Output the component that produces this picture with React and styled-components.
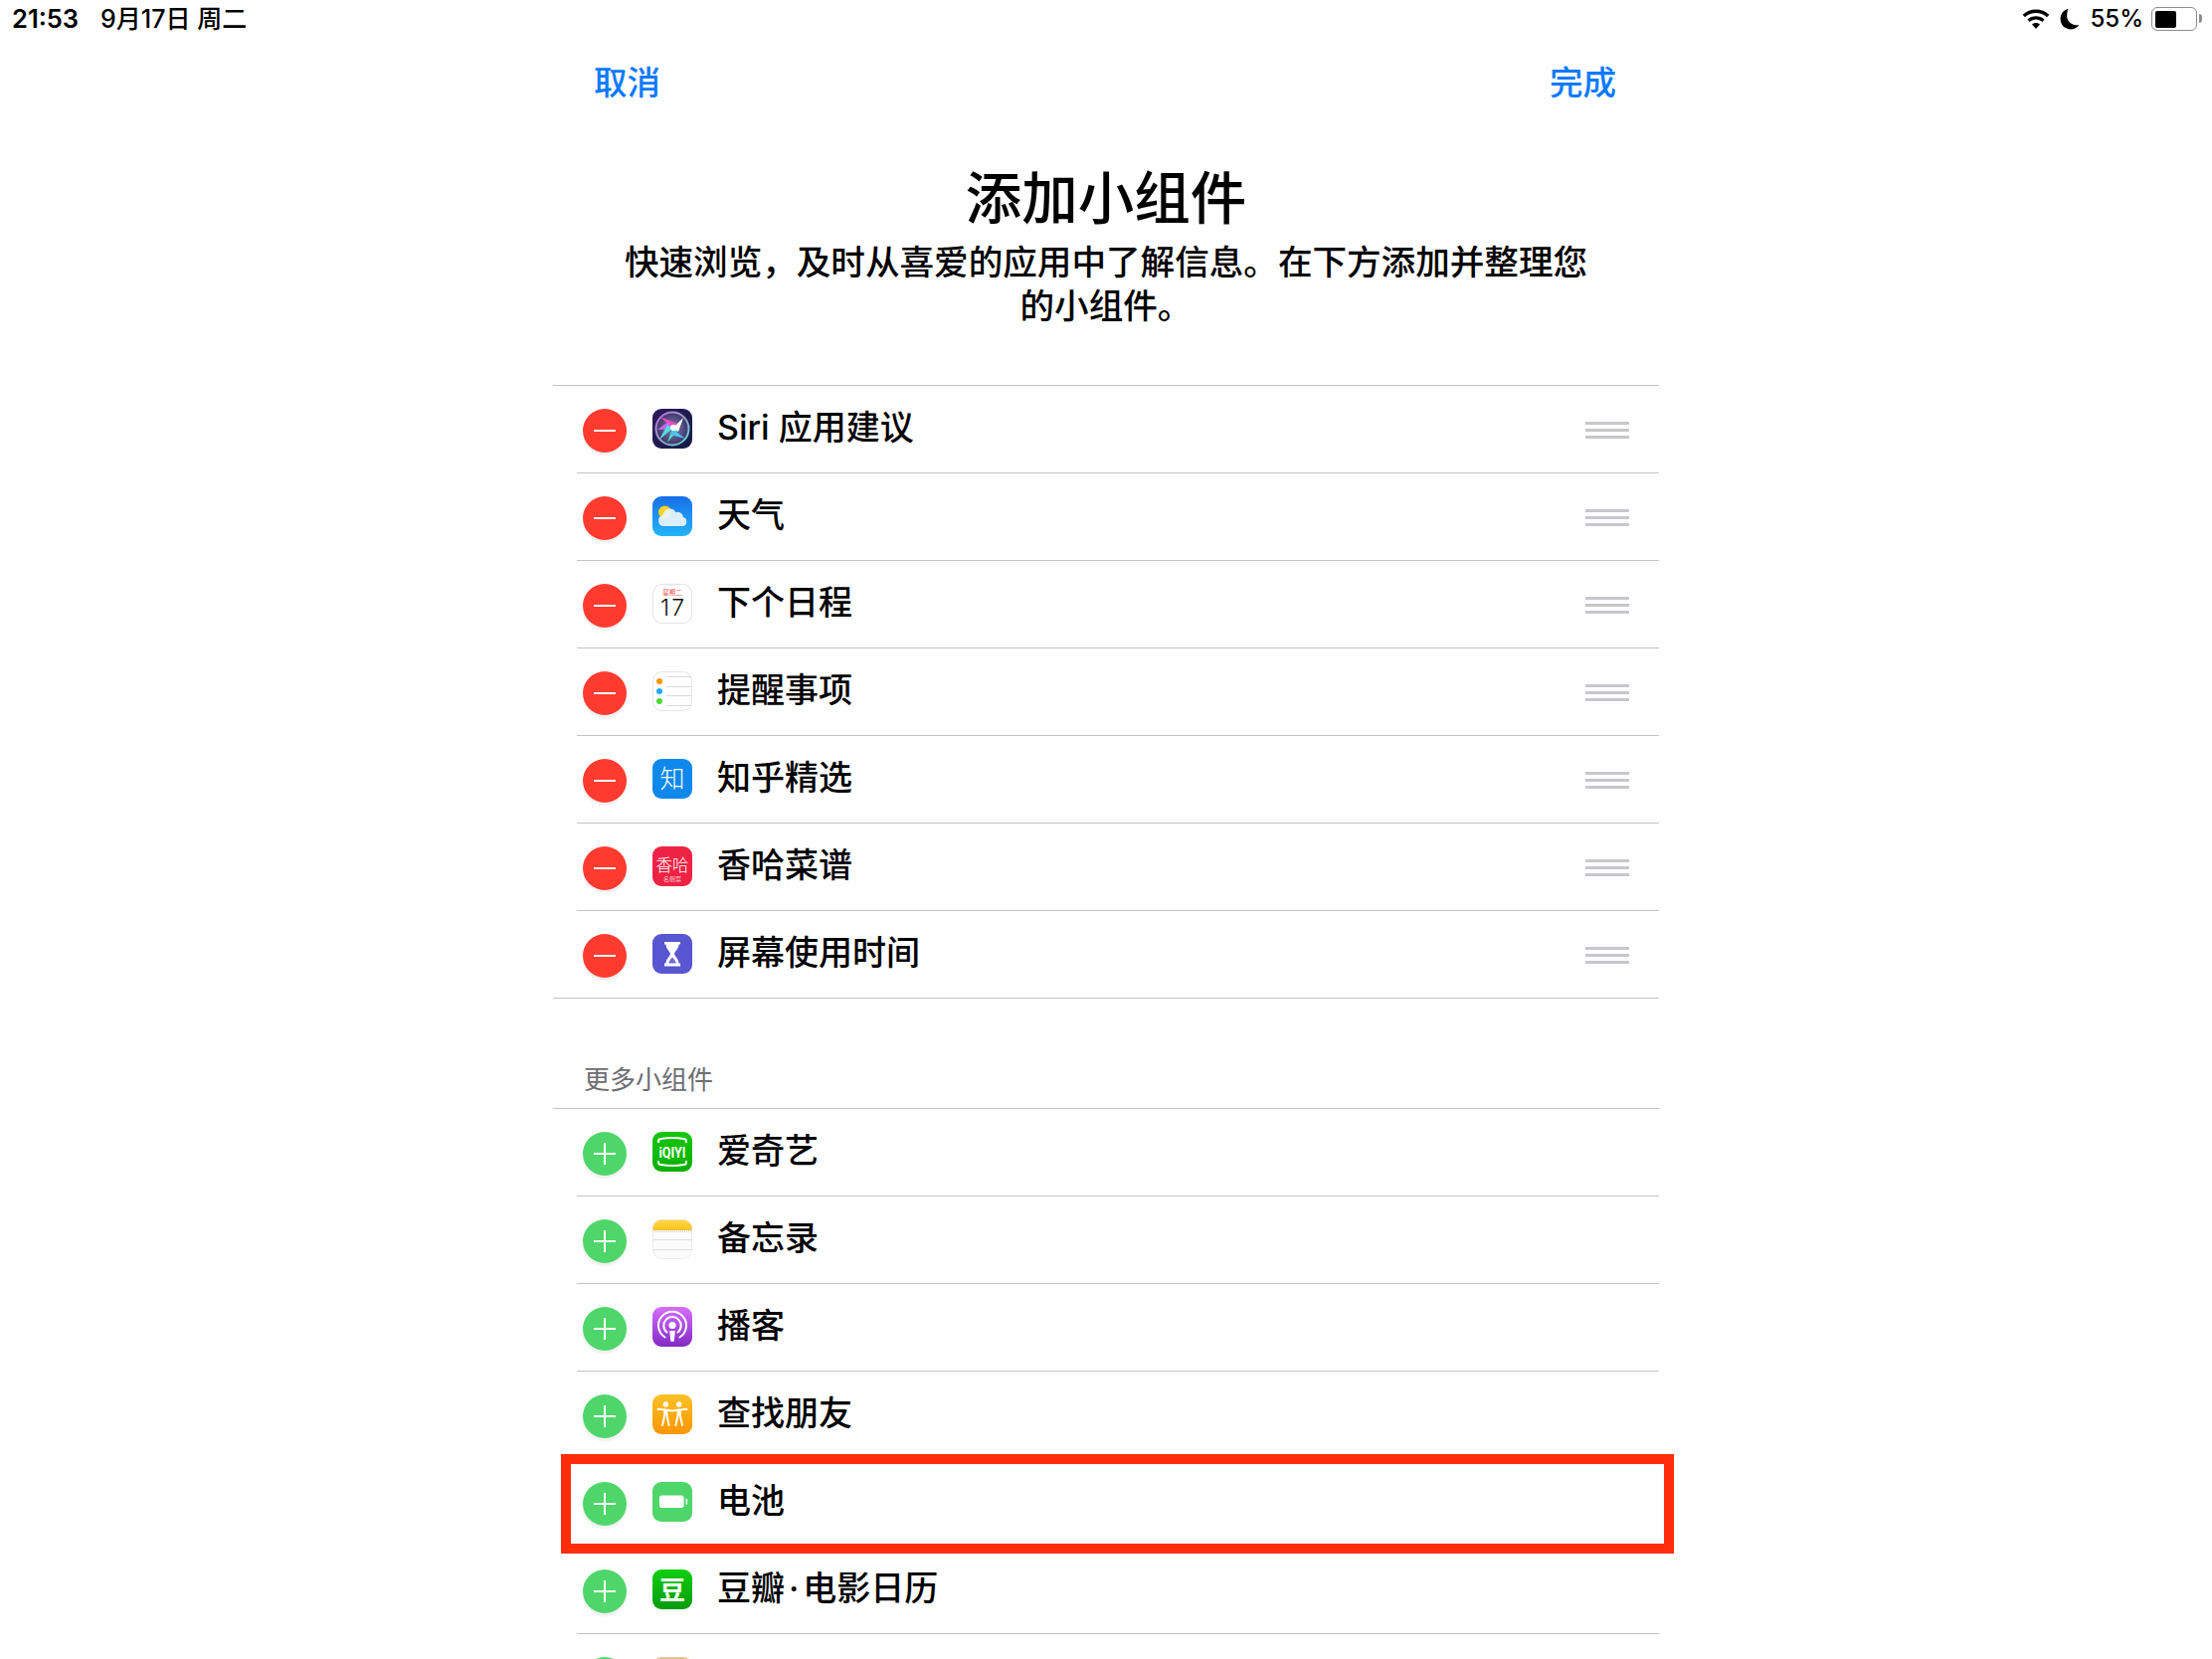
import styled, { createGlobalStyle } from 'styled-components';

const CJK = `"Noto Sans CJK SC", sans-serif`;
const LATIN_CJK = `Inter, "Noto Sans CJK SC", sans-serif`;

const GlobalStyle = createGlobalStyle`
  html, body {
    margin: 0;
    padding: 0;
    background: #fefefe;
  }
`;

const SiriIcon = () => (
  <svg viewBox="0 0 40 40" width="40" height="40">
    <defs>
      <linearGradient id="siriBg" x1="0" y1="0" x2="1" y2="1">
        <stop offset="0" stopColor="#2c1a5a" />
        <stop offset="1" stopColor="#131d45" />
      </linearGradient>
      <linearGradient id="siriRing" x1="0" y1="0" x2="1" y2="1">
        <stop offset="0" stopColor="#c06ad8" />
        <stop offset="0.5" stopColor="#9aa0c4" />
        <stop offset="1" stopColor="#58dcd0" />
      </linearGradient>
      <radialGradient id="siriDisc">
        <stop offset="0" stopColor="#8a78b4" />
        <stop offset="1" stopColor="#3a3668" />
      </radialGradient>
      <filter id="siriBlur">
        <feGaussianBlur stdDeviation="0.6" />
      </filter>
    </defs>
    <rect width="40" height="40" rx="9" fill="url(#siriBg)" />
    <circle cx="20" cy="20" r="16.5" fill="url(#siriDisc)" stroke="url(#siriRing)" strokeWidth="2" />
    <g filter="url(#siriBlur)">
      <path d="M20 20 L8 8 L25 15 Z" fill="#f04cb8" />
      <path d="M20 20 L31 9 L26 23 Z" fill="#ffffff" />
      <path d="M20 20 L5 21 L16 13 Z" fill="#d060ec" />
      <path d="M20 20 L7 31 L15 16 Z" fill="#50e0dc" />
      <path d="M20 20 L15 34 L25 22 Z" fill="#3ceab8" />
      <path d="M20 20 L33 30 L18 26 Z" fill="#4cc4f4" />
    </g>
    <circle cx="21" cy="19" r="3" fill="#ffffff" />
  </svg>
);

const WeatherIcon = () => (
  <svg viewBox="0 0 40 40" width="40" height="40">
    <defs>
      <linearGradient id="weatherBg" x1="0" y1="0" x2="0" y2="1">
        <stop offset="0" stopColor="#1a6fe8" />
        <stop offset="1" stopColor="#22b4f8" />
      </linearGradient>
    </defs>
    <rect width="40" height="40" rx="9" fill="url(#weatherBg)" />
    <circle cx="12.5" cy="16" r="6.5" fill="#fbd31f" />
    <path d="M11 30 a5.6 5.6 0 0 1 -0.6 -11 a7 7 0 0 1 13 -3 a5.8 5.8 0 0 1 7.6 5 a4.6 4.6 0 0 1 -1 9 Z" fill="#e8f4fd" fillOpacity="0.93" />
  </svg>
);

const CalendarIcon = () => (
  <svg viewBox="0 0 40 40" width="40" height="40">
    <rect x="0.5" y="0.5" width="39" height="39" rx="9" fill="#ffffff" stroke="#e4e4e4" />
    <text x="20" y="11" textAnchor="middle" fontSize="6.5" fill="#f0524a" fontFamily={CJK}>星期二</text>
    <text x="20" y="31.5" textAnchor="middle" fontSize="23" fontWeight="300" fill="#111111" fontFamily="Inter, sans-serif" textLength="24" lengthAdjust="spacing">17</text>
  </svg>
);

const RemindersIcon = () => (
  <svg viewBox="0 0 40 40" width="40" height="40">
    <rect x="0.5" y="0.5" width="39" height="39" rx="9" fill="#ffffff" stroke="#e6e6e6" />
    <path d="M14 5.5H39M14 15.5H39M14 24.5H39M14 34.5H39" stroke="#d0d0d0" strokeWidth="0.8" />
    <circle cx="7" cy="10" r="3" fill="#ff9500" />
    <circle cx="7" cy="20" r="3" fill="#1fa8f4" />
    <circle cx="7" cy="30" r="3" fill="#4cd93c" />
  </svg>
);

const ZhihuIcon = () => (
  <svg viewBox="0 0 40 40" width="40" height="40">
    <rect width="40" height="40" rx="9" fill="#0f88eb" />
    <text x="20" y="29" textAnchor="middle" fontSize="25" fontWeight="300" fill="#ffffff" fontFamily={CJK}>知</text>
  </svg>
);

const XianghaIcon = () => (
  <svg viewBox="0 0 40 40" width="40" height="40">
    <rect width="40" height="40" rx="9" fill="#ee2344" />
    <text x="20" y="24.5" textAnchor="middle" fontSize="16.5" fontWeight="300" fill="#ffffff" fontFamily={CJK}>香哈</text>
    <text x="20" y="35" textAnchor="middle" fontSize="6" fill="#ffc4cc" fontFamily={CJK}>名厨菜</text>
  </svg>
);

const ScreenTimeIcon = () => (
  <svg viewBox="0 0 40 40" width="40" height="40">
    <rect width="40" height="40" rx="9" fill="#5856d0" />
    <path d="M12 8H28V10.5H26.5C26.5 15 22.5 17.5 22 20C22.5 22.5 26.5 25 26.5 29.5H28V32.5H12V29.5H13.5C13.5 25 17.5 22.5 18 20C17.5 17.5 13.5 15 13.5 10.5H12Z" fill="#ffffff" />
    <path d="M20 23.5C18.4 25 16.8 27 16.2 29.5H23.8C23.2 27 21.6 25 20 23.5Z" fill="#6f6dd8" />
  </svg>
);

const IqiyiIcon = () => (
  <svg viewBox="0 0 40 40" width="40" height="40">
    <defs>
      <linearGradient id="iqiyiBg" x1="0" y1="0" x2="0" y2="1">
        <stop offset="0" stopColor="#16c60a" />
        <stop offset="1" stopColor="#0ab000" />
      </linearGradient>
    </defs>
    <rect width="40" height="40" rx="9" fill="url(#iqiyiBg)" />
    <path d="M6 11V9.5C6 8 7 7 8.5 7C16 5.8 24 5.8 31.5 7C33 7 34 8 34 9.5V11M6 29V30.5C6 32 7 33 8.5 33C16 34.2 24 34.2 31.5 33C33 33 34 32 34 30.5V29" fill="none" stroke="#ffffff" strokeWidth="2" />
    <text x="20" y="25.5" textAnchor="middle" fontSize="15" fontWeight="700" fill="#ffffff" fontFamily="Roboto, sans-serif" textLength="27" lengthAdjust="spacingAndGlyphs">iQIYI</text>
  </svg>
);

const NotesIcon = () => (
  <svg viewBox="0 0 40 40" width="40" height="40">
    <defs>
      <linearGradient id="notesTop" x1="0" y1="0" x2="0" y2="1">
        <stop offset="0" stopColor="#ffd84a" />
        <stop offset="1" stopColor="#fcc21b" />
      </linearGradient>
      <clipPath id="notesClip">
        <rect width="40" height="40" rx="9" />
      </clipPath>
    </defs>
    <g clipPath="url(#notesClip)">
      <rect width="40" height="40" fill="#fbfbfb" />
      <rect width="40" height="11" fill="url(#notesTop)" />
      <path d="M0 12H40" stroke="#bdbdbd" strokeWidth="1.2" strokeDasharray="1 1" />
      <path d="M0 20.5H40M0 30.5H40" stroke="#dedede" strokeWidth="0.9" />
    </g>
    <rect x="0.5" y="0.5" width="39" height="39" rx="9" fill="none" stroke="#e6e6e6" strokeOpacity="0.7" />
  </svg>
);

const PodcastsIcon = () => (
  <svg viewBox="0 0 40 40" width="40" height="40">
    <defs>
      <linearGradient id="podcastBg" x1="0" y1="0" x2="0" y2="1">
        <stop offset="0" stopColor="#d56efc" />
        <stop offset="1" stopColor="#8329c4" />
      </linearGradient>
    </defs>
    <rect width="40" height="40" rx="9" fill="url(#podcastBg)" />
    <path d="M12.5 30.5A14 14 0 1 1 27.5 30.5" fill="none" stroke="#ffffff" strokeWidth="2" strokeLinecap="round" />
    <path d="M14.5 25.5A8.7 8.7 0 1 1 25.5 25.5" fill="none" stroke="#ffffff" strokeWidth="2" strokeLinecap="round" />
    <circle cx="20" cy="18.5" r="3.6" fill="#ffffff" />
    <path d="M17.2 24H22.8L21.8 34C21.6 35.2 18.4 35.2 18.2 34Z" fill="#ffffff" />
  </svg>
);

const FriendsIcon = () => (
  <svg viewBox="0 0 40 40" width="40" height="40">
    <defs>
      <linearGradient id="friendsBg" x1="0" y1="0" x2="0" y2="1">
        <stop offset="0" stopColor="#fdc127" />
        <stop offset="1" stopColor="#fd9500" />
      </linearGradient>
    </defs>
    <rect width="40" height="40" rx="9" fill="url(#friendsBg)" />
    <g fill="#ffffff">
      <circle cx="13.3" cy="10" r="2.7" />
      <circle cx="26.7" cy="10" r="2.7" />
    </g>
    <g fill="none" stroke="#ffffff" strokeWidth="2" strokeLinecap="round">
      <path d="M5.5 14.8L13.3 15.5L20 16.4L26.7 15.5L34.5 14.8" />
      <path d="M12.4 20L10 31M14.2 20L16.6 31" />
      <path d="M25.8 20L23.4 31M27.6 20L30 31" />
      <path d="M13.3 15.5V21" strokeWidth="4" strokeLinecap="butt" />
      <path d="M26.7 15.5V21" strokeWidth="4" strokeLinecap="butt" />
    </g>
  </svg>
);

const BatteryAppIcon = () => (
  <svg viewBox="0 0 40 40" width="40" height="40">
    <rect width="40" height="40" rx="9" fill="#4fd66a" />
    <rect x="7" y="13.5" width="24.5" height="12.5" rx="2.5" fill="#ffffff" />
    <rect x="33.6" y="16.8" width="1.5" height="6" rx="0.7" fill="#ffffff" />
  </svg>
);

const DoubanIcon = () => (
  <svg viewBox="0 0 40 40" width="40" height="40">
    <defs>
      <linearGradient id="doubanBg" x1="0" y1="0" x2="0" y2="1">
        <stop offset="0" stopColor="#10cf10" />
        <stop offset="1" stopColor="#089b0c" />
      </linearGradient>
    </defs>
    <rect width="40" height="40" rx="9" fill="url(#doubanBg)" />
    <text x="20" y="29.5" textAnchor="middle" fontSize="26" fontWeight="700" fill="#ffffff" fontFamily={CJK}>豆</text>
  </svg>
);

const NextIcon = () => (
  <svg viewBox="0 0 40 40" width="40" height="40">
    <rect width="40" height="40" rx="9" fill="#e2c690" />
  </svg>
);

const WifiGlyph = () => (
  <svg viewBox="0 0 28 22" width="28" height="22">
    <path d="M14 21L10 16.6C12.4 14.6 15.6 14.6 18 16.6Z" fill="#000" />
    <path d="M7.6 14C11.4 10.6 16.6 10.6 20.4 14L22.6 11.6C17.6 7.2 10.4 7.2 5.4 11.6Z" fill="#000" />
    <path d="M3 9.2C9.4 3.6 18.6 3.6 25 9.2L27.4 6.8C19.6 -0.2 8.4 -0.2 0.6 6.8Z" fill="#000" />
  </svg>
);

const MoonGlyph = () => (
  <svg viewBox="0 0 20 22" width="20" height="22">
    <path d="M8.4 1C3.6 2.2 0.6 6 0.6 11C0.6 17 5.2 21.4 11 21.4C14.4 21.4 17.4 19.8 19.4 17.2C13.4 18 7.4 14.4 7.2 8.4C7.1 5.6 7.6 3 8.4 1Z" fill="#000" />
  </svg>
);

const CURRENT_WIDGETS = [
  { id: 'siri', label: 'Siri 应用建议', Icon: SiriIcon },
  { id: 'weather', label: '天气', Icon: WeatherIcon },
  { id: 'calendar', label: '下个日程', Icon: CalendarIcon },
  { id: 'reminders', label: '提醒事项', Icon: RemindersIcon },
  { id: 'zhihu', label: '知乎精选', Icon: ZhihuIcon },
  { id: 'xiangha', label: '香哈菜谱', Icon: XianghaIcon },
  { id: 'screentime', label: '屏幕使用时间', Icon: ScreenTimeIcon },
];

const Dot = styled.span`
  margin: 0 4px;
`;

const MORE_WIDGETS = [
  { id: 'iqiyi', label: '爱奇艺', Icon: IqiyiIcon },
  { id: 'notes', label: '备忘录', Icon: NotesIcon },
  { id: 'podcasts', label: '播客', Icon: PodcastsIcon },
  { id: 'friends', label: '查找朋友', Icon: FriendsIcon },
  { id: 'battery', label: '电池', Icon: BatteryAppIcon, highlighted: true },
  { id: 'douban', label: <>豆瓣<Dot>·</Dot>电影日历</>, Icon: DoubanIcon },
  { id: 'next', label: '', Icon: NextIcon },
];

const App = () => {
  return (
    <Page>
      <GlobalStyle />
      <StatusBar>
        <StatusLeft>
          <span>21:53</span>
          <DateText>9月17日 周二</DateText>
        </StatusLeft>
        <StatusRight>
          <WifiGlyph />
          <MoonGlyph />
          <Percent>55%</Percent>
          <Battery>
            <BatteryFill />
          </Battery>
        </StatusRight>
      </StatusBar>
      <Sheet>
        <Nav>
          <NavButton>取消</NavButton>
          <NavButton>完成</NavButton>
        </Nav>
        <Title>添加小组件</Title>
        <Subtitle>快速浏览，及时从喜爱的应用中了解信息。在下方添加并整理您的小组件。</Subtitle>
        <List>
          {CURRENT_WIDGETS.map(({ id, label, Icon }, index) => (
            <Row key={id} $last={index === CURRENT_WIDGETS.length - 1}>
              <RoundButton $kind="remove" />
              <IconSlot>
                <Icon />
              </IconSlot>
              <Label>{label}</Label>
              <Handle>
                <i />
                <i />
                <i />
              </Handle>
            </Row>
          ))}
        </List>
        <SectionLabel>更多小组件</SectionLabel>
        <List>
          {MORE_WIDGETS.map(({ id, label, Icon, highlighted }) => (
            <Row key={id}>
              <RoundButton $kind="add" />
              <IconSlot>
                <Icon />
              </IconSlot>
              <Label>{label}</Label>
              {highlighted && <Highlight />}
            </Row>
          ))}
        </List>
      </Sheet>
    </Page>
  );
};

const Page = styled.div`
  height: 1668px;
  overflow: hidden;
  background: #fefefe;
  color: #000;
  font-family: ${LATIN_CJK};
`;

const StatusBar = styled.div`
  height: 38px;
  padding: 0 15px 0 12px;
  display: flex;
  align-items: center;
  justify-content: space-between;
  font-size: 25.5px;
  line-height: 30px;
  font-weight: 600;
`;

const StatusLeft = styled.div`
  display: flex;
  align-items: baseline;
  gap: 22px;
`;

const DateText = styled.span`
  font-size: 25px;
  font-weight: 500;
`;

const StatusRight = styled.div`
  display: flex;
  align-items: center;
  gap: 10px;
  font-size: 24px;
  font-weight: 500;
`;

const Percent = styled.span`
  margin-right: -2px;
`;

const Battery = styled.div`
  position: relative;
  width: 46px;
  height: 24px;
  box-sizing: border-box;
  border: 1.5px solid #8e8e8e;
  border-radius: 6px;
  padding: 2.5px;

  &::after {
    content: '';
    position: absolute;
    right: -6px;
    top: 6px;
    width: 3px;
    height: 9px;
    border-radius: 0 3px 3px 0;
    background: #8e8e8e;
  }
`;

const BatteryFill = styled.div`
  width: 21px;
  height: 100%;
  background: #000;
  border-radius: 2px;
`;

const Sheet = styled.div`
  width: 1112px;
  margin: 0 auto;
`;

const Nav = styled.div`
  height: 86px;
  padding: 0 43px 2px 41px;
  box-sizing: border-box;
  display: flex;
  align-items: center;
  justify-content: space-between;
`;

const NavButton = styled.span`
  font-family: ${CJK};
  font-size: 33.5px;
  font-weight: 500;
  color: #0a7aff;
`;

const Title = styled.h1`
  margin: 37px 0 0;
  font-family: ${CJK};
  font-size: 56.5px;
  line-height: 68px;
  font-weight: 500;
  text-align: center;
`;

const Subtitle = styled.p`
  width: 990px;
  margin: 10px auto 60px;
  font-family: ${CJK};
  font-size: 34.6px;
  line-height: 44px;
  font-weight: 500;
  text-align: center;
`;

const List = styled.div`
  border-top: 1px solid #c4c4c4;
`;

const Row = styled.div`
  position: relative;
  box-sizing: border-box;
  height: 88px;
  margin-left: ${({ $last }) => ($last ? '0' : '24px')};
  padding: 23px 30px 0 ${({ $last }) => ($last ? '30px' : '6px')};
  border-bottom: 1px solid #c4c4c4;
  display: flex;
  align-items: flex-start;
`;

const RoundButton = styled.div`
  position: relative;
  flex: none;
  width: 44px;
  height: 44px;
  border-radius: 50%;
  background: ${({ $kind }) => ($kind === 'remove' ? '#ff3b30' : '#4fd66a')};
  box-shadow: 0 3px 2px rgba(0, 0, 0, 0.06);

  &::before {
    content: '';
    position: absolute;
    left: 11px;
    top: 21px;
    width: 22px;
    height: 2px;
    background: #fff;
  }

  &::after {
    content: '';
    display: ${({ $kind }) => ($kind === 'add' ? 'block' : 'none')};
    position: absolute;
    left: 21px;
    top: 11px;
    width: 2px;
    height: 22px;
    background: #fff;
  }
`;

const IconSlot = styled.div`
  flex: none;
  width: 40px;
  height: 40px;
  margin-left: 26px;

  svg {
    display: block;
  }
`;

const Label = styled.span`
  margin-left: 25px;
  font-size: 34px;
  line-height: 40px;
  font-weight: 500;
  margin-top: -1px;
`;

const Handle = styled.div`
  margin-left: auto;
  margin-top: 13px;
  width: 44px;
  display: grid;
  gap: 4px;

  i {
    display: block;
    height: 3px;
    background: #c7c7cc;
  }
`;

const SectionLabel = styled.div`
  height: 110px;
  padding: 0 0 12px 31px;
  box-sizing: border-box;
  display: flex;
  align-items: flex-end;
  font-family: ${CJK};
  font-size: 26px;
  line-height: 36px;
  color: #6d6d72;
`;

const Highlight = styled.div`
  position: absolute;
  left: -16px;
  right: -15px;
  top: -5px;
  height: 100px;
  box-sizing: border-box;
  border: 10px solid #ff2d0a;
`;

export default App;
